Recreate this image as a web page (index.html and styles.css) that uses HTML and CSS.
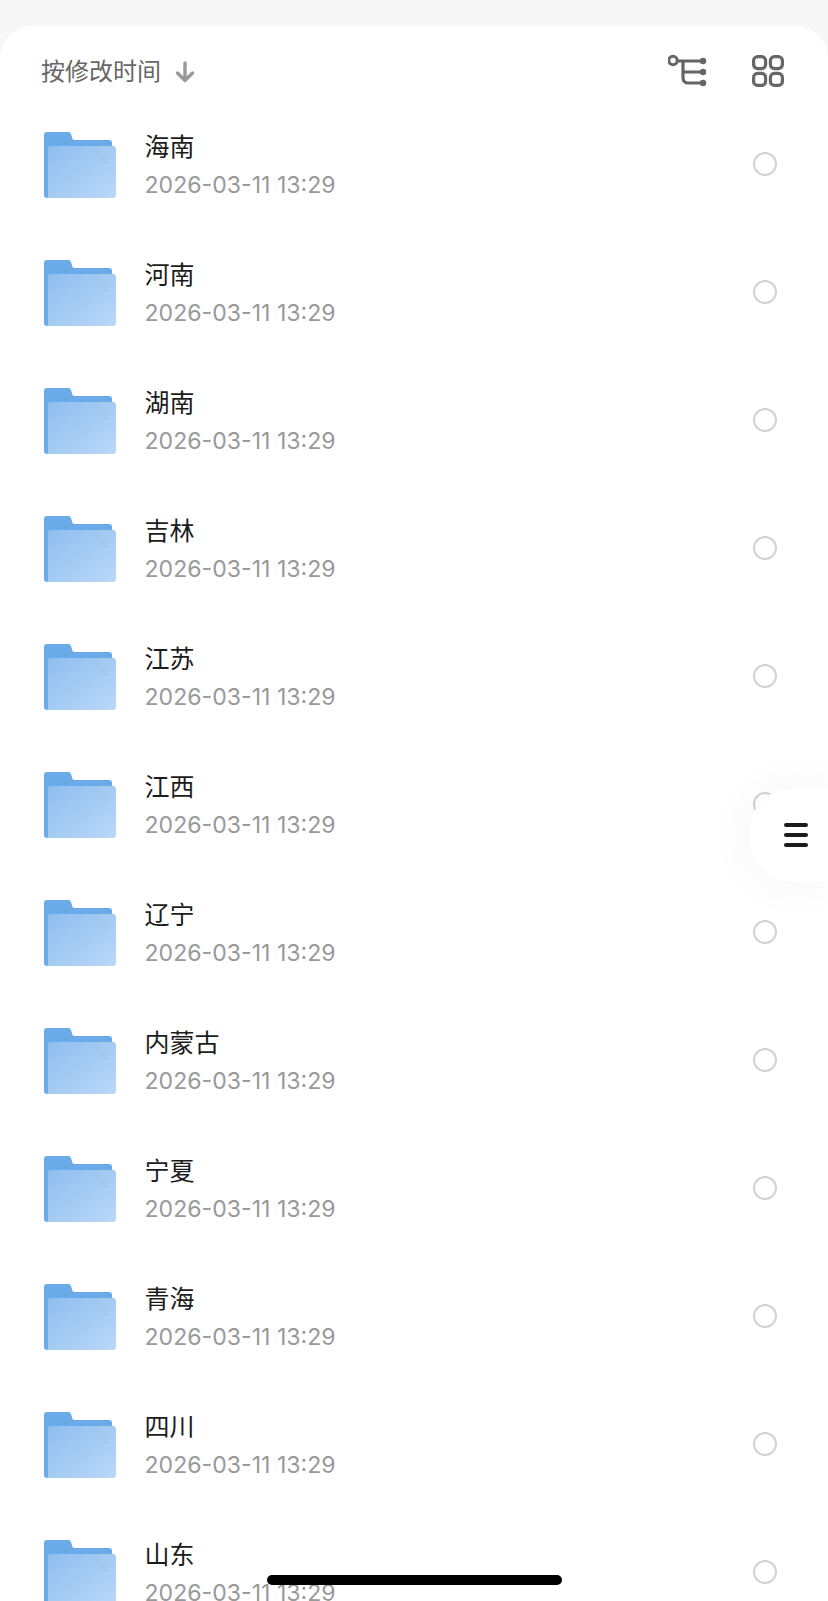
FILE: index.html
```html
<!DOCTYPE html>
<html lang="zh">
<head>
<meta charset="utf-8">
<title>文件列表</title>
<link rel="stylesheet" href="styles.css">
</head>
<body>
<svg class="defs" width="0" height="0" aria-hidden="true">
  <defs>
    <linearGradient id="fg" x1="0" y1="0" x2="1" y2="1">
      <stop offset="0" stop-color="#90bdee"/>
      <stop offset="1" stop-color="#b9d8f8"/>
    </linearGradient>
    <symbol id="folder" viewBox="0 0 72 66">
      <path d="M0 3a3 3 0 0 1 3-3h21a3 3 0 0 1 3 2l1 3a3 3 0 0 0 3 3h34a3 3 0 0 1 3 3v55H3a3 3 0 0 1-3-3z" fill="#6baae8"/>
      <path d="M4 17a3 3 0 0 1 3-3h62a3 3 0 0 1 3 3v46a3 3 0 0 1-3 3H3a3 3 0 0 0 1-3z" fill="url(#fg)"/>
      <path d="M57 24h7M57 27h7M57 30h7" stroke="#a3c7ec" stroke-width="1.6" fill="none"/>
    </symbol>
  </defs>
</svg>
<main class="sheet">
  <header class="toolbar">
    <div class="sort">
      <span class="sort-label">按修改时间</span>
      <svg class="arrow" width="20" height="22" viewBox="0 0 20 22"><path d="M10 2v17M2.5 12l7.5 7.5 7.5-7.5" fill="none" stroke="#999" stroke-width="3.4" stroke-linecap="round" stroke-linejoin="round"/></svg>
    </div>
    <div class="tools">
      <svg width="40" height="34" viewBox="0 0 40 34"><circle cx="5" cy="6.5" r="4.2" fill="none" stroke="#666" stroke-width="3"/><path d="M9 7h26M15 7v17a5 5 0 0 0 5 5h15M15 18h20" fill="none" stroke="#666" stroke-width="3.2"/><circle cx="35" cy="7" r="3.200" fill="#666"/><circle cx="35" cy="18" r="3.200" fill="#666"/><circle cx="35" cy="29" r="3.200" fill="#666"/></svg>
      <svg width="32" height="32" viewBox="0 0 32 32"><g fill="none" stroke="#666" stroke-width="3.2"><rect x="1.6" y="1.6" width="12" height="12" rx="4"/><rect x="18.400" y="1.6" width="12" height="12" rx="4"/><rect x="1.6" y="18.400" width="12" height="12" rx="4"/><rect x="18.400" y="18.400" width="12" height="12" rx="4"/></g></svg>
    </div>
  </header>
  <ul class="list">
    <li class="row"><svg class="folder"><use href="#folder"/></svg><div class="meta"><p class="name">海南</p><p class="date">2026-03-11 13:29</p></div><span class="radio"></span></li>
    <li class="row"><svg class="folder"><use href="#folder"/></svg><div class="meta"><p class="name">河南</p><p class="date">2026-03-11 13:29</p></div><span class="radio"></span></li>
    <li class="row"><svg class="folder"><use href="#folder"/></svg><div class="meta"><p class="name">湖南</p><p class="date">2026-03-11 13:29</p></div><span class="radio"></span></li>
    <li class="row"><svg class="folder"><use href="#folder"/></svg><div class="meta"><p class="name">吉林</p><p class="date">2026-03-11 13:29</p></div><span class="radio"></span></li>
    <li class="row"><svg class="folder"><use href="#folder"/></svg><div class="meta"><p class="name">江苏</p><p class="date">2026-03-11 13:29</p></div><span class="radio"></span></li>
    <li class="row"><svg class="folder"><use href="#folder"/></svg><div class="meta"><p class="name">江西</p><p class="date">2026-03-11 13:29</p></div><span class="radio"></span></li>
    <li class="row"><svg class="folder"><use href="#folder"/></svg><div class="meta"><p class="name">辽宁</p><p class="date">2026-03-11 13:29</p></div><span class="radio"></span></li>
    <li class="row"><svg class="folder"><use href="#folder"/></svg><div class="meta"><p class="name">内蒙古</p><p class="date">2026-03-11 13:29</p></div><span class="radio"></span></li>
    <li class="row"><svg class="folder"><use href="#folder"/></svg><div class="meta"><p class="name">宁夏</p><p class="date">2026-03-11 13:29</p></div><span class="radio"></span></li>
    <li class="row"><svg class="folder"><use href="#folder"/></svg><div class="meta"><p class="name">青海</p><p class="date">2026-03-11 13:29</p></div><span class="radio"></span></li>
    <li class="row"><svg class="folder"><use href="#folder"/></svg><div class="meta"><p class="name">四川</p><p class="date">2026-03-11 13:29</p></div><span class="radio"></span></li>
    <li class="row"><svg class="folder"><use href="#folder"/></svg><div class="meta"><p class="name">山东</p><p class="date">2026-03-11 13:29</p></div><span class="radio"></span></li>
  </ul>
</main>
<aside class="float-tab"><span></span><span></span><span></span></aside>
<div class="home-bar"></div>
</body>
</html>
```
FILE: styles.css
```css
* { box-sizing: border-box; }
html, body { margin: 0; height: 1601px; overflow: hidden; background: #f7f7f7; }
body { position: relative; padding-top: 26px; font-family: Inter, "Noto Sans CJK SC", sans-serif; }
.defs { position: absolute; }
.sheet { height: 1575px; background: #fff; border-radius: 32px 32px 0 0; overflow: hidden; }
.toolbar { height: 75px; display: flex; align-items: center; justify-content: space-between; padding: 14px 44px 0 41px; }
.sort { display: flex; align-items: center; gap: 14px; font-size: 24px; color: #666; }
.sort-label { margin-bottom: 2px; }
.arrow { margin-top: 2px; }
.tools { display: flex; align-items: center; gap: 44px; }
.list { list-style: none; margin: 0; padding: 0; }
.row { height: 128px; display: flex; align-items: center; padding-left: 44px; padding-right: 51px; }
.folder { width: 72px; height: 66px; flex: none; }
.meta { flex: 1; margin-left: 28.500px; }
.name, .date { margin: 0; }
.name { font-size: 25px; line-height: 34px; margin-top: -1px; color: #1c1c1c; }
.date { font-size: 23.100px; line-height: 30px; margin-top: 6px; color: #999; }
.radio { width: 24px; height: 24px; border: 2px solid #d2d2d2; border-radius: 50%; flex: none; margin-bottom: 2px; }
.float-tab { position: absolute; left: 749px; top: 788px; width: 79px; height: 94px; background: #fff; border-radius: 44px 0 0 44px; box-shadow: 0 0 50px rgba(0,0,0,.05); display: flex; flex-direction: column; justify-content: center; gap: 6px; padding-left: 35px; }
.float-tab span { width: 24px; height: 4px; border-radius: 2px; background: #1a1a1a; }
.home-bar { position: absolute; left: 267px; top: 1575px; width: 295px; height: 10px; border-radius: 5px; background: #000; }
```
